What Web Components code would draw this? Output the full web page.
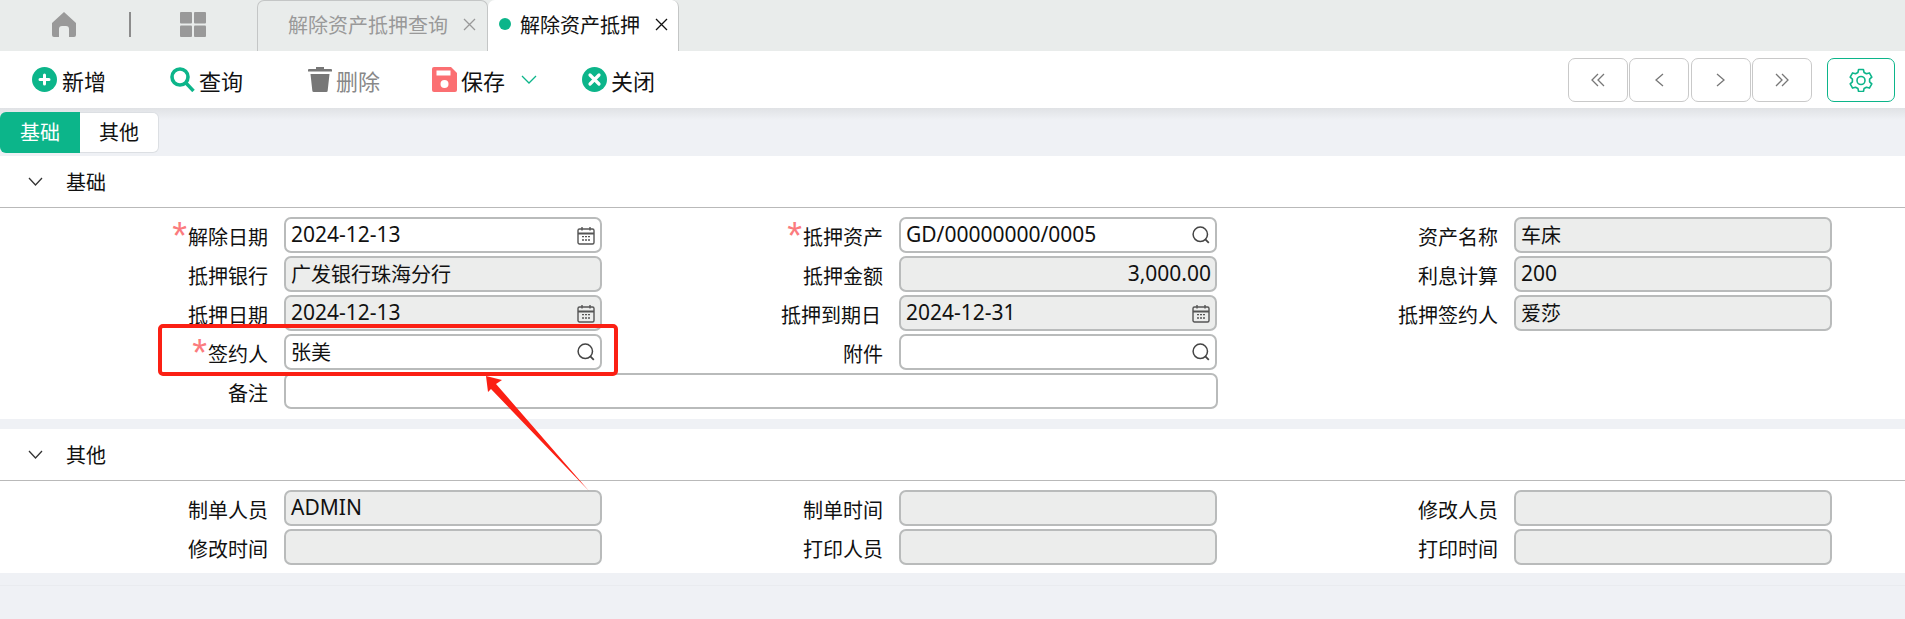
<!DOCTYPE html>
<html>
<head>
<meta charset="utf-8">
<style>
    html, body { margin: 0; height: 100%; }
    body {
        background: #eff1f5;
        overflow: hidden;
        font-family: "Noto Sans", "Noto Sans CJK SC", sans-serif;
        font-size: 20px;
        color: #111;
        position: relative;
    }
</style>
</head>
<body>
<tab-bar>
    <tab-item>解除资产抵押查询</tab-item>
    <tab-item active>解除资产抵押</tab-item>
</tab-bar>
<tool-bar></tool-bar>
<sub-tabs></sub-tabs>
<form-section title="基础" id="base">
    <form-field label="解除日期" value="2024-12-13" icon="date" required></form-field>
    <form-field label="抵押资产" value="GD/00000000/0005" icon="search" required></form-field>
    <form-field label="资产名称" value="车床" readonly></form-field>
    <form-field label="抵押银行" value="广发银行珠海分行" readonly></form-field>
    <form-field label="抵押金额" value="3,000.00" align="right" readonly></form-field>
    <form-field label="利息计算" value="200" readonly></form-field>
    <form-field label="抵押日期" value="2024-12-13" icon="date" readonly></form-field>
    <form-field label="抵押到期日" value="2024-12-31" icon="date" readonly tuck></form-field>
    <form-field label="抵押签约人" value="爱莎" readonly></form-field>
    <form-field label="签约人" value="张美" icon="search" required></form-field>
    <form-field label="附件" icon="search"></form-field>
    <form-field label="备注" wide></form-field>
</form-section>
<form-section title="其他" id="other" tight>
    <form-field label="制单人员" value="ADMIN" readonly></form-field>
    <form-field label="制单时间" readonly></form-field>
    <form-field label="修改人员" readonly></form-field>
    <form-field label="修改时间" readonly></form-field>
    <form-field label="打印人员" readonly></form-field>
    <form-field label="打印时间" readonly></form-field>
</form-section>
<page-foot></page-foot>
<mark-up></mark-up>

<script>
const icons = {
    date: `<svg width="18" height="19" viewBox="0 0 18 19" fill="none" stroke="#555" stroke-width="1.4">
        <rect x="1" y="3" width="16" height="15" rx="1.5"/>
        <path d="M1 7.5h16" stroke-width="2"/><path d="M5 1v3.5M13 1v3.5"/>
        <path d="M5 10.7h2M8 10.7h2M11 10.7h2M5 14h2M8 14h2M11 14h2" stroke-width="1.3"/></svg>`,
    search: `<svg width="18" height="18" viewBox="0 0 18 18" fill="none" stroke="#444" stroke-width="1.5">
        <circle cx="8.3" cy="8.3" r="7.2"/><path d="M13.6 13.6l3.2 3.2" stroke-width="1.8"/></svg>`,
    chevron: `<svg width="15" height="9" viewBox="0 0 15 9" fill="none" stroke="#333" stroke-width="1.3"><path d="M1 1l6.5 7L14 1"/></svg>`
};

class TabBar extends HTMLElement {
    constructor() {
        super();
        this.attachShadow({ mode: "open" });
        this.shadowRoot.innerHTML = `
        <style>
            :host { display: flex; height: 51px; background: #e9eceb; box-sizing: border-box; }
            #home { width: 129px; display: flex; justify-content: flex-end; padding-right: 53px; box-sizing: border-box; align-items: center; padding-bottom: 3px; }
            #sep { width: 2px; height: 25px; background: #8c8c8c; margin-top: 12px; }
            #apps { width: 126px; padding-left: 49px; box-sizing: border-box; display: flex; align-items: center; padding-bottom: 3px; }
            #tabs { display: flex; }
        </style>
        <div id="home"><svg width="24" height="25" viewBox="0 0 24 25"><path fill="#999" d="M12 0L24 11V23a2 2 0 0 1-2 2h-5V17a3 3 0 0 0-3-3h-4a3 3 0 0 0-3 3v8H2a2 2 0 0 1-2-2V11z"/></svg></div>
        <div id="sep"></div>
        <div id="apps"><svg width="26" height="25" viewBox="0 0 26 25" fill="#999"><rect width="12" height="11.5" rx="1"/><rect x="14" width="12" height="11.5" rx="1"/><rect y="13.5" width="12" height="11.5" rx="1"/><rect x="14" y="13.5" width="12" height="11.5" rx="1"/></svg></div>
        <div id="tabs"><slot></slot></div>`;
    }
}

class TabItem extends HTMLElement {
    constructor() {
        super();
        this.attachShadow({ mode: "open" });
        this.shadowRoot.innerHTML = `
        <style>
            :host { display: flex; align-items: center; height: 51px; box-sizing: border-box; padding: 0 0 3px 30px; width: 231px; color: #999; border: 1px solid #c4c6c6; border-bottom: 0; border-radius: 7px 7px 0 0; gap: 15px; white-space: nowrap; }
            :host([active]) { background: #fff; color: #111; width: 191px; padding-left: 11px; gap: 0; border-left: 0; border-top: 0; }
            #dot { display: none; width: 12px; height: 12px; border-radius: 50%; background: #0cb58a; margin-right: 9px; flex: none; }
            :host([active]) #dot { display: block; }
            svg { flex: none; }
            :host([active]) svg { margin-left: 15px; }
        </style>
        <span id="dot"></span><slot></slot>
        <svg width="13" height="13" viewBox="0 0 13 13" stroke="currentColor" stroke-width="1.3"><path d="M1 1l11 11M12 1L1 12"/></svg>`;
    }
}

class ToolButton extends HTMLElement {
    constructor() {
        super();
        this.attachShadow({ mode: "open" });
        this.shadowRoot.innerHTML = `
        <style>
            :host { display: flex; align-items: center; gap: 4px; font-size: 22px; white-space: nowrap; }
            :host(:first-child) { gap: 5px; }
            :host([off]) { color: #888; }
            ::slotted(svg) { flex: none; }
        </style>
        <slot name="icon"></slot><slot></slot>`;
    }
}
class ToolBar extends HTMLElement {
    constructor() {
        super();
        this.attachShadow({ mode: "open" });
        this.shadowRoot.innerHTML = `
        <style>
            :host { display: flex; align-items: center; height: 57px; background: #fff; box-sizing: border-box; padding-left: 32px; position: relative; z-index: 1; }
            #left { display: flex; flex: 1; }
            #left > :nth-child(1), #left > :nth-child(2) { width: 138px; }
            #left > :nth-child(3) { width: 124px; }
            #left > :nth-child(4) { width: 150px; }
            #pager { display: flex; gap: 1.5px; margin-right: 15px; }
            .nav { width: 60px; height: 44px; box-sizing: border-box; border: 1px solid #c9c9c9; border-radius: 7px; display: flex; align-items: center; justify-content: center; }
            #gear { width: 68px; height: 44px; box-sizing: border-box; border: 1px solid #0cb58a; border-radius: 7px; display: flex; align-items: center; justify-content: center; margin-right: 10px; }
            .arrow { margin-left: 12px; }
        </style>
        <div id="left">
            <tool-button>
                <svg slot="icon" width="25" height="25" viewBox="0 0 25 25"><circle cx="12.5" cy="12.5" r="12.5" fill="#0cb58a"/><path d="M12.5 8v9M8 12.5h9" stroke="#fff" stroke-width="3" stroke-linecap="round"/></svg>
                新增
            </tool-button>
            <tool-button>
                <svg slot="icon" width="25" height="25" viewBox="0 0 25 25" fill="none" stroke="#0cb58a"><circle cx="10" cy="10" r="8" stroke-width="3.6"/><path d="M15.5 15.5l8 8.5" stroke-width="3.4"/></svg>
                查询
            </tool-button>
            <tool-button off>
                <svg slot="icon" width="24" height="25" viewBox="0 0 24 25" fill="#777"><path d="M8 0h8v2h7a1 1 0 0 1 1 1v1.500H0V3a1 1 0 0 1 1-1h7zM2.500 7h19l-1.800 16.500a1.500 1.500 0 0 1-1.500 1.500H5.800a1.500 1.500 0 0 1-1.500-1.500z"/></svg>
                删除
            </tool-button>
            <tool-button>
                <svg slot="icon" width="25" height="25" viewBox="0 0 25 25"><path fill="#fb6f72" d="M2 0h17l6 6v17a2 2 0 0 1-2 2H2a2 2 0 0 1-2-2V2a2 2 0 0 1 2-2z"/><rect x="4.500" y="3.500" width="14" height="5" fill="#fff"/><circle cx="12.500" cy="17" r="4" fill="#fff"/></svg>
                保存
                <svg class="arrow" width="16" height="9" viewBox="0 0 16 9" fill="none" stroke="#0cb58a" stroke-width="1.300"><path d="M1 1l7 7 7-7"/></svg>
            </tool-button>
            <tool-button>
                <svg slot="icon" width="25" height="25" viewBox="0 0 25 25"><circle cx="12.500" cy="12.500" r="12.500" fill="#0cb58a"/><path d="M8 8l9 9M17 8l-9 9" stroke="#fff" stroke-width="3.200" stroke-linecap="round"/></svg>
                关闭
            </tool-button>
        </div>
        <div id="pager">
            <div class="nav"><svg width="14" height="14" viewBox="0 0 14 14" fill="none" stroke="#777" stroke-width="1.300"><path d="M7 1L1 7l6 6M13 1L7 7l6 6"/></svg></div>
            <div class="nav"><svg width="9" height="14" viewBox="0 0 9 14" fill="none" stroke="#777" stroke-width="1.300"><path d="M8 1L1 7l7 6"/></svg></div>
            <div class="nav"><svg width="9" height="14" viewBox="0 0 9 14" fill="none" stroke="#777" stroke-width="1.300"><path d="M1 1l7 6-7 6"/></svg></div>
            <div class="nav"><svg width="14" height="14" viewBox="0 0 14 14" fill="none" stroke="#777" stroke-width="1.300"><path d="M1 1l6 6-6 6M7 1l6 6-6 6"/></svg></div>
        </div>
        <div id="gear"><svg width="24" height="24" viewBox="0 0 24 24" fill="none" stroke="#0cb58a" stroke-width="1.600" stroke-linejoin="round"><path d="M9.600 1.500h4.800l.7 3 2.300 1.300 3-.9 2.400 4.200-2.200 2.100v2.600l2.200 2.100-2.400 4.200-3-.9-2.300 1.300-.7 3H9.600l-.7-3-2.300-1.300-3 .9L1.200 15.900l2.200-2.100v-2.600L1.200 9.100l2.400-4.200 3 .9 2.300-1.300z"/><circle cx="12" cy="12.500" r="4"/></svg></div>`;
    }
}

class SubTabs extends HTMLElement {
    constructor() {
        super();
        this.attachShadow({ mode: "open" });
        this.shadowRoot.innerHTML = `
        <style>
            :host { display: block; height: 48px; box-sizing: border-box; padding-top: 4px; background: linear-gradient(#e0e2e5, #eff1f5 12px); }
            #wrap { display: flex; width: 159px; height: 41px; }
            #wrap div { display: flex; align-items: center; justify-content: center; padding-bottom: 2px; box-sizing: border-box; }
            #a { width: 80px; background: #0cb58a; color: #fff; border-radius: 6px 0 0 6px; }
            #b { width: 79px; background: #fff; border: 1px solid #dcdfe3; border-left: 0; border-radius: 0 6px 6px 0; }
        </style>
        <div id="wrap"><div id="a">基础</div><div id="b">其他</div></div>`;
    }
}

class FormSection extends HTMLElement {
    constructor() {
        super();
        this.attachShadow({ mode: "open" });
        this.shadowRoot.innerHTML = `
        <style>
            :host { display: block; background: #fff; margin-bottom: 10px; }
            :host([tight]) { margin-bottom: 12px; }
            #head { height: 52px; box-sizing: border-box; border-bottom: 1px solid #b9b9b9; display: flex; align-items: center; padding-left: 28px; gap: 23px; }
            #grid { display: grid; grid-template-columns: 284px 318px 297px 318px 297px 318px; row-gap: 3px; padding: 9px 0 10px; }
            :host([tight]) #grid { padding-bottom: 8px; }
        </style>
        <div id="head">${icons.chevron}<span>${this.getAttribute("title")}</span></div>
        <div id="grid"><slot></slot></div>`;
    }
}

class FormField extends HTMLElement {
    constructor() {
        super();
        this.attachShadow({ mode: "open" });
        var value = this.getAttribute("value") || "";
        var icon = this.getAttribute("icon");
        // latin values read a little larger than the cjk ones in the reference
        var latin = /^[\x20-\x7e]+$/.test(value);
        this.shadowRoot.innerHTML = `
        <style>
            :host { display: contents; }
            #label { display: flex; justify-content: flex-end; align-items: center; padding-right: 16px; height: 36px; padding-top: 2px; box-sizing: border-box; white-space: nowrap; }
            :host([tuck]) #label { padding-right: 18px; }
            :host([wide]) #label { grid-column: 1; }
            #star { color: #fb7b7e; font-size: 38px; line-height: 20px; height: 20px; margin-right: 1px; font-family: "Liberation Sans", sans-serif; }
            #box { height: 36px; box-sizing: border-box; border: 2px solid #b9bbbb; border-radius: 7px; background: #fff; display: flex; align-items: center; padding: 0 5px 2px 5px; justify-content: space-between; white-space: nowrap; }
            :host([readonly]) #box { background: #ecedec; }
            :host([align=right]) #box { justify-content: flex-end; padding-right: 4px; }
            :host([wide]) #box { grid-column: span 3; margin-right: -1px; }
            .latin { font-size: 21px; }
            svg { flex: none; margin-top: 2px; }
        </style>
        <div id="label">${this.hasAttribute("required") ? '<span id="star">*</span>' : ""}${this.getAttribute("label")}</div>
        <div id="box"><span class="${latin ? "latin" : ""}">${value}</span>${icon ? icons[icon] : ""}</div>`;
    }
}

class PageFoot extends HTMLElement {
    constructor() {
        super();
        this.attachShadow({ mode: "open" });
        this.shadowRoot.innerHTML = `<style>:host { display: block; border-top: 1px solid #e9ebef; }</style>`;
    }
}

class MarkUp extends HTMLElement {
    constructor() {
        super();
        this.attachShadow({ mode: "open" });
        this.shadowRoot.innerHTML = `
        <style>
            :host { position: absolute; left: 0; top: 0; width: 1905px; height: 619px; pointer-events: none; z-index: 5; }
            svg { display: block; }
        </style>
        <svg width="1905" height="619">
            <rect x="160" y="326" width="456" height="48" rx="3" fill="none" stroke="#fb2014" stroke-width="4"/>
            <polygon fill="#fb2014" points="486,376 502,380 496,384 589,491 491,389 488,392"/>
        </svg>`;
    }
}

window.customElements.define("tab-bar", TabBar);
window.customElements.define("tab-item", TabItem);
window.customElements.define("tool-button", ToolButton);
window.customElements.define("tool-bar", ToolBar);
window.customElements.define("sub-tabs", SubTabs);
window.customElements.define("form-section", FormSection);
window.customElements.define("form-field", FormField);
window.customElements.define("page-foot", PageFoot);
window.customElements.define("mark-up", MarkUp);
</script>
</body>
</html>
